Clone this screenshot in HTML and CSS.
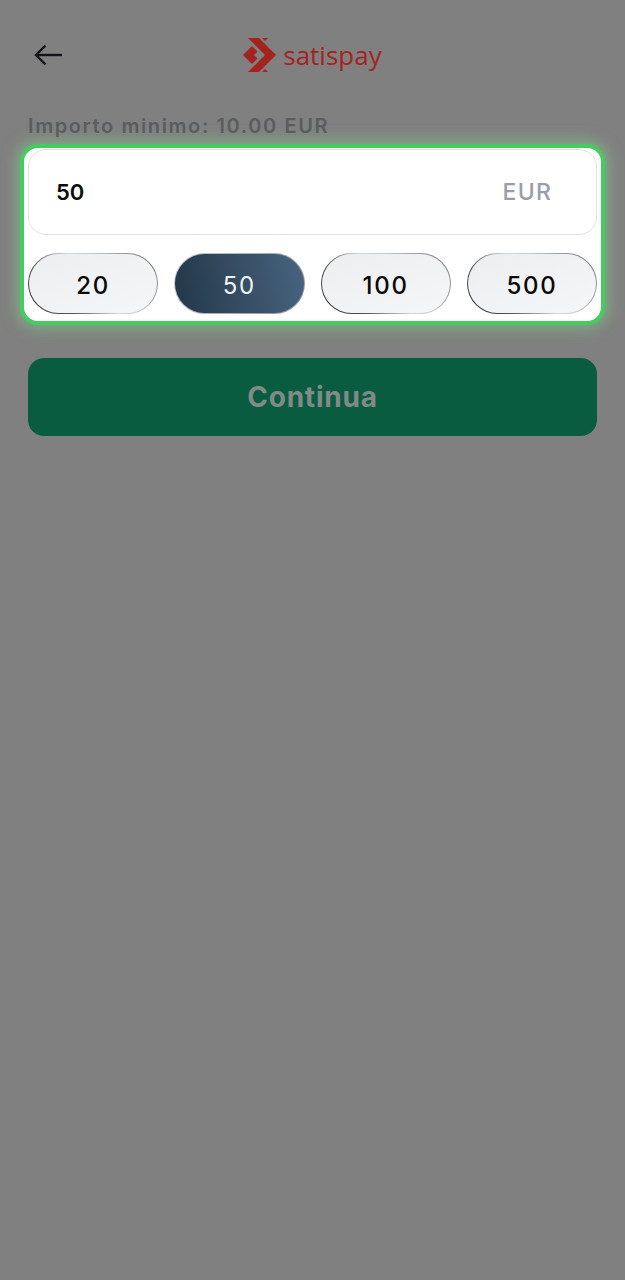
FILE: index.html
```html
<!DOCTYPE html>
<html lang="it">
<head>
  <meta charset="UTF-8">
  <meta name="viewport" content="width=device-width, initial-scale=1.0">
  <title>Satispay</title>
  <link rel="stylesheet" href="styles.css">
</head>
<body>
  <!-- header -->
  <div class="header">
    <svg class="back" width="30" height="24" viewBox="0 0 30 24" fill="none" stroke="#14141c" stroke-width="2.400">
      <path d="M30 12H4"/>
      <path d="M13.500 2.500L4 12l9.500 9.500"/>
    </svg>
    <div class="brand">
      <svg class="brand-mark" width="34" height="34" viewBox="0 0 34 34" fill="#a5231f">
        <path d="M5 0h11l17 17-17 17H5l17-17z"/>
        <path d="M0 17l9-9 5.500 5.500-3.500 3.500 3.500 3.500L9 26z"/>
        <path d="M19 0h6l-3 3zM19 34h6l-3-3z"/>
      </svg>
      <span class="brand-name">satispay</span>
    </div>
  </div>

  <div class="min-label">Importo minimo: 10.00 EUR</div>

  <!-- importo -->
  <div class="amount-box">
    <div class="amount-input">
      <span class="amount-value">50</span>
      <span class="amount-currency">EUR</span>
    </div>
    <div class="chips">
      <div class="chip">20</div>
      <div class="chip active">50</div>
      <div class="chip">100</div>
      <div class="chip">500</div>
    </div>
  </div>

  <button class="continue">Continua</button>
</body>
</html>
```

FILE: styles.css
```css
* {
  box-sizing: border-box;
}
body {
  margin: 0;
  height: 1280px;
  padding: 0 28px;
  background-color: #808080;
  font-family: 'Inter', 'Liberation Sans', sans-serif;
  overflow: hidden;
}
.header {
  height: 110px;
  display: flex;
  align-items: center;
  justify-content: center;
  position: relative;
}
.back {
  position: absolute;
  left: 4px;
  top: 43px;
}
.brand {
  display: flex;
  align-items: center;
  gap: 6px;
}
.brand-name {
  font-family: 'Open Sans', sans-serif;
  font-size: 26px;
  color: #a5231f;
  line-height: 34px;
}
.min-label {
  height: 34px;
  line-height: 32px;
  font-size: 20px;
  font-weight: 600;
  letter-spacing: 1.6px;
  color: #5a5c5f;
  white-space: nowrap;
}
.amount-box {
  margin: 0 -8px;
  height: 181px;
  padding: 1px 4px 0;
  background-color: #fff;
  border: 4px solid #44cc5f;
  border-radius: 18px;
  box-shadow: 0 0 14px 4px rgba(125, 215, 135, 0.5);
}
.amount-input {
  height: 86px;
  display: flex;
  align-items: center;
  justify-content: space-between;
  padding: 0 44px 0 27px;
  border: 1px solid #e0e2e6;
  border-radius: 18px;
}
.amount-value {
  font-size: 22px;
  font-weight: 600;
  color: #0a0a0a;
}
.amount-currency {
  font-size: 23px;
  font-weight: 500;
  letter-spacing: 1.2px;
  color: #9a9da8;
}
.chips {
  margin-top: 18px;
  display: flex;
  gap: 16px;
}
.chip {
  flex: 1;
  height: 61px;
  padding-top: 3px;
  display: flex;
  align-items: center;
  justify-content: center;
  font-size: 24px;
  font-weight: 500;
  letter-spacing: 1.700px;
  color: #0a0a0a;
  border: 1.5px solid transparent;
  border-radius: 31px;
  background:
    linear-gradient(160deg, #eceef0, #f5f6f7) padding-box,
    linear-gradient(50deg, #2e2e33 0%, #55555a 25%, #d8d8da 50%, #c4c4c6 65%, #6d6d72 100%) border-box;
}
.chip.active {
  font-weight: 400;
  color: #eef3f7;
  background:
    linear-gradient(80deg, #233749, #48647f) padding-box,
    linear-gradient(130deg, #c8ccd2, #8a929c) border-box;
}
.continue {
  display: block;
  width: 100%;
  height: 78px;
  margin-top: 33px;
  border: none;
  border-radius: 16px;
  background-color: #0a5c40;
  color: #808a86;
  font-family: inherit;
  font-size: 28px;
  font-weight: 700;
  letter-spacing: 0.8px;
}
```
